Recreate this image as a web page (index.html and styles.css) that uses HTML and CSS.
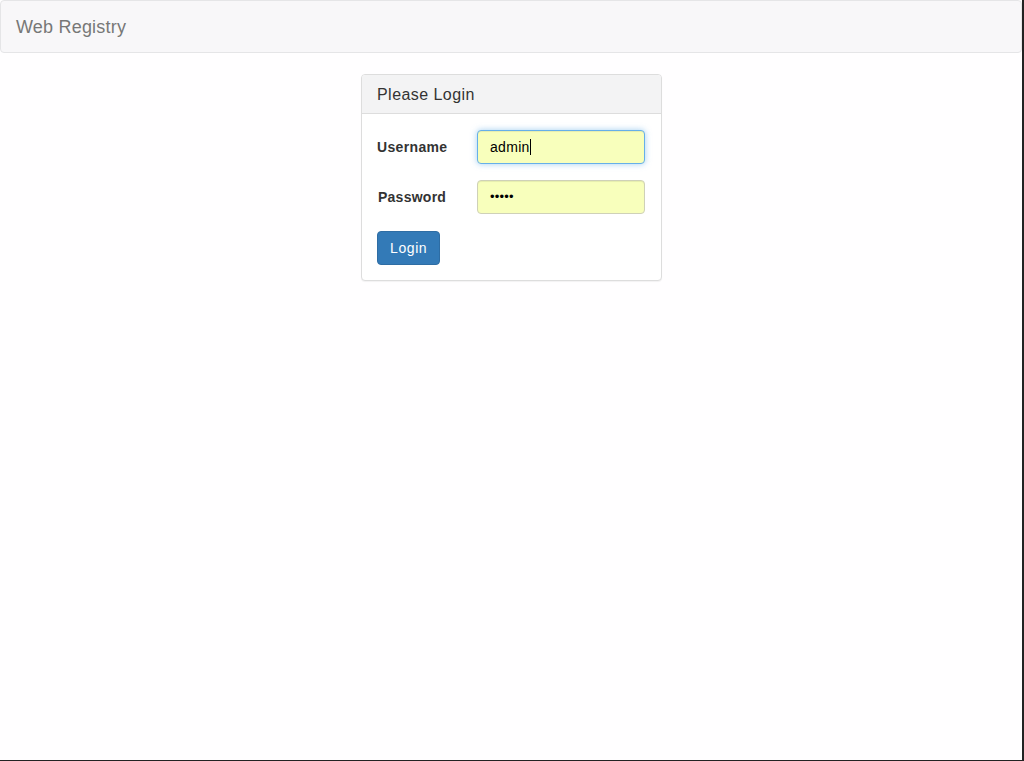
FILE: index.html
```html
<!DOCTYPE html>
<html>
<head>
<meta charset="utf-8">
<title>Web Registry</title>
<link rel="stylesheet" href="styles.css">
</head>
<body>
<div class="frame">
  <nav class="navbar"><span class="brand">Web Registry</span></nav>
  <div class="panel">
    <div class="panel-heading">Please Login</div>
    <div class="panel-body">
      <div class="form-row">
        <label class="label">Username</label>
        <div class="input focus">admin<span class="caret"></span></div>
      </div>
      <div class="form-row">
        <label class="label pw">Password</label>
        <div class="input dots">•••••</div>
      </div>
      <button class="btn">Login</button>
    </div>
  </div>
</div>
</body>
</html>
```

FILE: styles.css
```css
html, body { margin: 0; padding: 0; background: #fff; }
body { font-family: "Liberation Sans", Arial, sans-serif; font-size: 14px; color: #333; }
.frame {
  width: 1024px; height: 761px; box-sizing: border-box;
  border-right: 2px solid #222; border-bottom: 1px solid #222;
  background: #fffeff;
}
.navbar {
  width: 1022px; height: 53px; box-sizing: border-box;
  background: #f8f7f9; border: 1px solid #e5e5e7; border-radius: 4px;
  display: flex; align-items: center; padding-left: 15px;
}
.brand { font-size: 18px; color: #777; line-height: 20px; letter-spacing: 0.2px; }
.panel {
  width: 301px; box-sizing: border-box; margin: 21px 0 0 361px;
  border: 1px solid #dddddd; border-radius: 4px; background: #fff;
  box-shadow: 0 1px 1px rgba(0,0,0,0.05);
}
.panel-heading {
  height: 39px; box-sizing: border-box; padding: 10px 15px;
  background: #f3f3f4; border-bottom: 1px solid #dddddd;
  border-radius: 3px 3px 0 0; font-size: 16px; line-height: 19px; color: #333;
  letter-spacing: 0.45px;
}
.panel-body { padding: 16px 15px 15px; }
.form-row { display: flex; align-items: center; margin-bottom: 16px; }
.label { width: 100px; font-weight: bold; font-size: 14px; color: #333; letter-spacing: 0.35px; }
.label.pw { padding-left: 1px; width: 99px; letter-spacing: 0.25px; }
.input {
  width: 168px; height: 34px; box-sizing: border-box; padding: 6px 12px;
  background: #f8ffbc; border: 1px solid #cfd1b8; border-radius: 4px;
  font-size: 14px; line-height: 20px; color: #000; letter-spacing: 0.3px;
  box-shadow: inset 0 1px 1px rgba(0,0,0,0.075);
}
.input.focus {
  border-color: #66afe9;
  box-shadow: inset 0 1px 1px rgba(0,0,0,0.075), 0 0 6px rgba(102,175,233,0.6);
}
.caret { display: inline-block; width: 1px; height: 16px; background: #000; vertical-align: -3px; }
.dots { font-size: 13px; letter-spacing: 0.2px; }
.btn {
  display: block; margin-top: 17px; height: 34px; padding: 6px 12px;
  background: #337ab7; border: 1px solid #2e6da4; border-radius: 4px;
  color: #fff; font-family: "Liberation Sans", Arial, sans-serif; font-size: 14px; line-height: 20px;
  letter-spacing: 0.6px;
}
```
